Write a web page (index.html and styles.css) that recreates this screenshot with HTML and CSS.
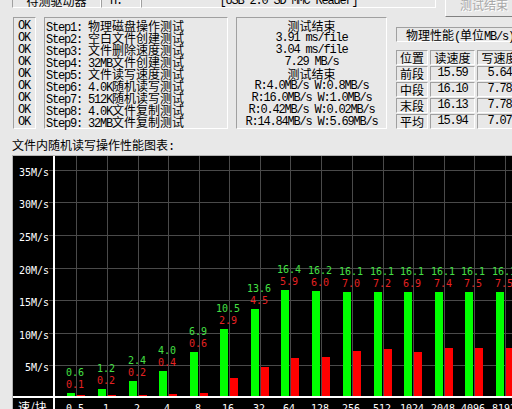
FILE: index.html
```html
<!DOCTYPE html>
<html>
<head>
<meta charset="utf-8">
<link rel="stylesheet" href="styles.css">
</head>
<body>
<div class="top">
  <div class="tb tb1"><span class="cn">待测驱动器</span></div>
  <div class="tb tb2">H:</div>
  <div class="tb tb3">[USB 2.0 SD MMC Reader]</div>
  <div class="btn"><span class="cn">测试结束</span></div>
</div>
<div class="panels">
  <div class="box okbox">
    <div class="ln">OK</div><div class="ln">OK</div><div class="ln">OK</div>
    <div class="ln">OK</div><div class="ln">OK</div><div class="ln">OK</div>
    <div class="ln">OK</div><div class="ln">OK</div><div class="ln">OK</div>
  </div>
  <div class="box steps">
    <div class="ln">Step1: <span class="cn">物理磁盘操作测试</span></div>
    <div class="ln">Step2: <span class="cn">空白文件创建测试</span></div>
    <div class="ln">Step3: <span class="cn">文件删除速度测试</span></div>
    <div class="ln">Step4: 32MB<span class="cn">文件创建测试</span></div>
    <div class="ln">Step5: <span class="cn">文件读写速度测试</span></div>
    <div class="ln">Step6: 4.0K<span class="cn">随机读写测试</span></div>
    <div class="ln">Step7: 512K<span class="cn">随机读写测试</span></div>
    <div class="ln">Step8: 4.0K<span class="cn">文件复制测试</span></div>
    <div class="ln">Step9: 32MB<span class="cn">文件复制测试</span></div>
  </div>
  <div class="box mid">
    <div class="ln"><span class="cn">测试结束</span></div>
    <div class="ln">3.91 ms/file</div>
    <div class="ln">3.04 ms/file</div>
    <div class="ln">7.29 MB/s</div>
    <div class="ln"><span class="cn">测试结束</span></div>
    <div class="ln">R:4.0MB/s W:0.8MB/s</div>
    <div class="ln">R:16.0MB/s W:1.0MB/s</div>
    <div class="ln">R:0.42MB/s W:0.02MB/s</div>
    <div class="ln">R:14.84MB/s W:5.69MB/s</div>
  </div>
  <div class="right">
    <div class="phys"><span class="cn">物理性能</span>(<span class="cn">单位</span>MB/s)</div>
    <div class="tbl">
      <div class="cell"><span class="cn">位置</span></div><div class="cell"><span class="cn">读速度</span></div><div class="cell"><span class="cn">写速度</span></div>
      <div class="cell"><span class="cn">前段</span></div><div class="cell">15.59</div><div class="cell">5.64</div>
      <div class="cell"><span class="cn">中段</span></div><div class="cell">16.10</div><div class="cell">7.78</div>
      <div class="cell"><span class="cn">末段</span></div><div class="cell">16.13</div><div class="cell">7.78</div>
      <div class="cell"><span class="cn">平均</span></div><div class="cell">15.94</div><div class="cell">7.07</div>
    </div>
  </div>
</div>
<div class="ctitle"><span class="cn">文件内随机读写操作性能图表</span>:</div>
<div class="chart">
<svg class="plot" width="520" height="260" viewBox="13 156 520 260" xmlns="http://www.w3.org/2000/svg">
  <g class="grid">
    <path d="M49 170.5H533M49 202.5H533M49 235.5H533M49 268.5H533M49 300.5H533M49 333.5H533M49 365.5H533"/>
    <path d="M76.5 156V396M107.5 156V396M138.5 156V396M168.5 156V396M199.5 156V396M229.5 156V396M260.5 156V396M290.5 156V396M321.5 156V396M352.5 156V396M383.5 156V396M413.5 156V396M444.5 156V396M474.5 156V396M505.5 156V396"/>
  </g>
  <g class="gbar">
    <rect x="67" y="393" width="8" height="3"/>
    <rect x="98" y="389" width="8" height="7"/>
    <rect x="129" y="381" width="8" height="15"/>
    <rect x="159" y="371" width="8" height="25"/>
    <rect x="190" y="352" width="8" height="44"/>
    <rect x="220" y="329" width="8" height="67"/>
    <rect x="251" y="309" width="8" height="87"/>
    <rect x="281" y="290" width="8" height="106"/>
    <rect x="312" y="291" width="8" height="105"/>
    <rect x="343" y="292" width="8" height="104"/>
    <rect x="374" y="292" width="8" height="104"/>
    <rect x="404" y="292" width="8" height="104"/>
    <rect x="435" y="292" width="8" height="104"/>
    <rect x="465" y="292" width="8" height="104"/>
    <rect x="496" y="292" width="8" height="104"/>
  </g>
  <g class="rbar">
    <rect x="77" y="395" width="8" height="1"/>
    <rect x="108" y="395" width="8" height="1"/>
    <rect x="139" y="395" width="8" height="1"/>
    <rect x="169" y="394" width="8" height="2"/>
    <rect x="200" y="393" width="8" height="3"/>
    <rect x="230" y="378" width="8" height="18"/>
    <rect x="261" y="367" width="8" height="29"/>
    <rect x="291" y="358" width="8" height="38"/>
    <rect x="322" y="357" width="8" height="39"/>
    <rect x="353" y="351" width="8" height="45"/>
    <rect x="384" y="349" width="8" height="47"/>
    <rect x="414" y="352" width="8" height="44"/>
    <rect x="445" y="348" width="8" height="48"/>
    <rect x="475" y="348" width="8" height="48"/>
    <rect x="506" y="348" width="8" height="48"/>
  </g>
  <g class="axis">
    <rect x="53" y="156" width="2" height="260"/>
    <rect x="13" y="396" width="520" height="2"/>
  </g>
  <g class="ylab">
    <text x="49" y="176">35M/s</text>
    <text x="49" y="208">30M/s</text>
    <text x="49" y="241">25M/s</text>
    <text x="49" y="274">20M/s</text>
    <text x="49" y="306">15M/s</text>
    <text x="49" y="339">10M/s</text>
    <text x="49" y="371">5M/s</text>
  </g>
  <g class="glab">
    <text x="75" y="376">0.6</text>
    <text x="106" y="372">1.2</text>
    <text x="137" y="364">2.4</text>
    <text x="167" y="354">4.0</text>
    <text x="198" y="335">6.9</text>
    <text x="228" y="312">10.5</text>
    <text x="259" y="292">13.6</text>
    <text x="289" y="273">16.4</text>
    <text x="320" y="274">16.2</text>
    <text x="351" y="275">16.1</text>
    <text x="382" y="275">16.1</text>
    <text x="412" y="275">16.1</text>
    <text x="443" y="275">16.1</text>
    <text x="473" y="275">16.1</text>
    <text x="504" y="275">16.1</text>
  </g>
  <g class="rlab">
    <text x="75" y="388">0.1</text>
    <text x="106" y="384">0.2</text>
    <text x="137" y="376">0.2</text>
    <text x="167" y="366">0.4</text>
    <text x="198" y="347">0.6</text>
    <text x="228" y="324">2.9</text>
    <text x="259" y="304">4.5</text>
    <text x="289" y="285">5.9</text>
    <text x="320" y="286">6.0</text>
    <text x="351" y="287">7.0</text>
    <text x="382" y="287">7.2</text>
    <text x="412" y="287">6.9</text>
    <text x="443" y="287">7.4</text>
    <text x="473" y="287">7.5</text>
    <text x="504" y="287">7.5</text>
  </g>
  <g class="xlab">
    <text x="75" y="411.5">0.5</text>
    <text x="106" y="411.5">1</text>
    <text x="137" y="411.5">2</text>
    <text x="167" y="411.5">4</text>
    <text x="198" y="411.5">8</text>
    <text x="228" y="411.5">16</text>
    <text x="259" y="411.5">32</text>
    <text x="289" y="411.5">64</text>
    <text x="320" y="411.5">128</text>
    <text x="351" y="411.5">256</text>
    <text x="382" y="411.5">512</text>
    <text x="412" y="411.5">1024</text>
    <text x="443" y="411.5">2048</text>
    <text x="473" y="411.5">4096</text>
    <text x="504" y="411.5">8192</text>
  </g>
  <text class="xname" x="18" y="412">速/块</text>
</svg>
</div>
</body>
</html>
```
FILE: styles.css
```css
html, body {
  margin: 0;
  padding: 0;
  overflow: hidden;
}
body {
  width: 512px;
  height: 409px;
  background: #e8e8e8;
  color: #000;
  font-family: "Liberation Mono", monospace;
  font-size: 12px;
  letter-spacing: -1.2px;
  line-height: 12px;
}
.cn {
  font-family: "Noto Sans CJK SC", sans-serif;
  letter-spacing: 0;
}

/* top row (partly scrolled off) */
.top {
  display: flex;
  align-items: flex-start;
  margin-top: -12px;
  padding-left: 12px;
  height: 29px;
  white-space: nowrap;
}
.tb {
  box-sizing: border-box;
  height: 20px;
  border: 1px solid;
  border-color: #a0a0a0 #ffffff #ffffff #a0a0a0;
  display: flex;
  align-items: flex-end;
  justify-content: center;
  flex: none;
}
.tb1 { width: 89px; }
.tb2 { width: 40px; justify-content: flex-start; padding-left: 8px; }
.tb3 { width: 295px; }
.btn {
  box-sizing: border-box;
  flex: none;
  margin-left: 9px;
  width: 80px;
  height: 29px;
  border: 1px solid;
  border-color: #ffffff #808080 #808080 #ffffff;
  color: #a8a8a8;
  text-shadow: 1px 1px 0 #ffffff;
  display: flex;
  align-items: flex-end;
  padding-left: 14px;
  padding-bottom: 5px;
}

/* panels */
.panels {
  display: flex;
  align-items: flex-start;
  padding-left: 13px;
  height: 112px;
}
.box {
  box-sizing: border-box;
  flex: none;
  height: 112px;
  padding-top: 2px;
  border: 1px solid;
  border-color: #a0a0a0 #ffffff #ffffff #a0a0a0;
}
.ln {
  height: 12px;
  white-space: pre;
}
.okbox { width: 23px; padding-left: 4px; }
.steps { width: 184px; margin-left: 8px; padding-left: 1px; }
.mid { width: 151px; margin-left: 8px; text-align: center; }

.right {
  flex: none;
  margin-left: 9px;
  width: 140px;
  white-space: nowrap;
}
.phys {
  box-sizing: border-box;
  margin-top: 10px;
  height: 15px;
  width: 130px;
  line-height: 13px;
  padding-left: 9px;
  border: 1px solid;
  border-color: #a0a0a0 #ffffff #ffffff #a0a0a0;
}
.tbl {
  margin-top: 8px;
  display: grid;
  grid-template-columns: 32px 45px 45px;
  grid-auto-rows: 15px;
  column-gap: 2px;
  row-gap: 1px;
}
.cell {
  box-sizing: border-box;
  border: 1px solid;
  border-color: #a0a0a0 #ffffff #ffffff #a0a0a0;
  text-align: center;
  line-height: 13px;
}

/* chart */
.ctitle {
  margin-top: 10px;
  padding-left: 12px;
  height: 12px;
}
.chart {
  margin-top: 4px;
  margin-left: 12px;
  width: 520px;
  height: 260px;
  background: #000;
  border-top: 1px solid #b4b4b4;
  border-left: 1px solid #b4b4b4;
}
.plot {
  display: block;
}
.plot text {
  letter-spacing: 0;
  font-family: "DejaVu Sans Mono", monospace;
  font-size: 10px;
}
.grid path {
  stroke: #4a4a4a;
  stroke-width: 1;
  fill: none;
}
.gbar rect { fill: #00ff00; }
.rbar rect { fill: #ff0000; }
.axis rect { fill: #ffffff; }
.ylab text { fill: #ffffff; text-anchor: end; }
.xlab text { fill: #ffffff; text-anchor: middle; }
.glab text { fill: #44e044; text-anchor: middle; }
.rlab text { fill: #e52222; text-anchor: middle; }
.plot .xname {
  fill: #ffffff;
  font-family: "Noto Sans CJK SC", sans-serif;
  font-size: 12px;
}
```
